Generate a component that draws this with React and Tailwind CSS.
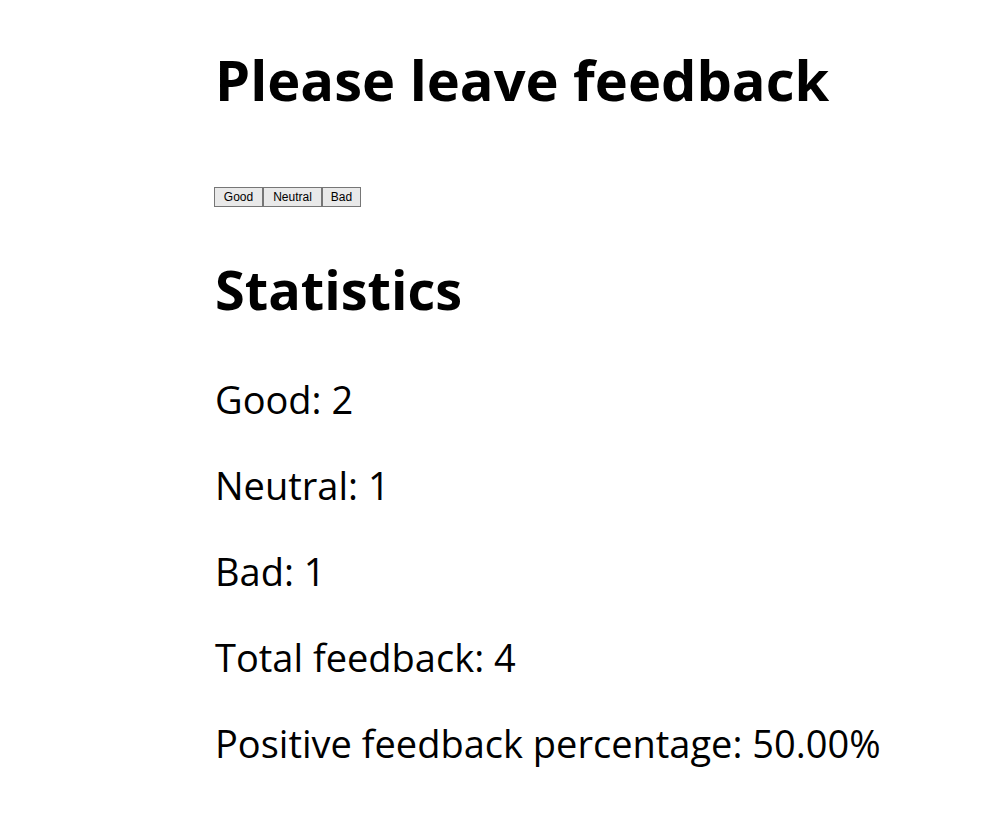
import { useState } from "react";

export default function App() {
  const [good, setGood] = useState(2);
  const [neutral, setNeutral] = useState(1);
  const [bad, setBad] = useState(1);

  const total = good + neutral + bad;
  const positive = total ? ((good / total) * 100).toFixed(2) : "0.00";

  const btn =
    "h-[20px] px-[6px] text-[12px] leading-none text-black bg-[#e9e9e9] border border-[#767676] font-['Liberation_Sans',Arial,sans-serif]";

  return (
    <div className="min-h-screen bg-white text-black pl-[215px] pt-[47px] font-['Open_Sans','Noto_Sans',sans-serif]">
      <h1 className="text-[56px] font-bold leading-[64px]">Please leave feedback</h1>

      <div className="flex mt-[76px] ml-[-1px]">
        <button className={`${btn} w-[49px] border-[#4a78a8]`} onClick={() => setGood(good + 1)}>
          Good
        </button>
        <button className={`${btn} w-[59px]`} onClick={() => setNeutral(neutral + 1)}>
          Neutral
        </button>
        <button className={`${btn} w-[39px]`} onClick={() => setBad(bad + 1)}>
          Bad
        </button>
      </div>

      <h2 className="mt-[50px] text-[54px] font-bold leading-[64px]">Statistics</h2>

      <div className="mt-[35px] text-[38px] leading-[86px]">
        <p>Good: {good}</p>
        <p>Neutral: {neutral}</p>
        <p>Bad: {bad}</p>
        <p>Total feedback: {total}</p>
        <p>Positive feedback percentage: {positive}%</p>
      </div>
    </div>
  );
}
